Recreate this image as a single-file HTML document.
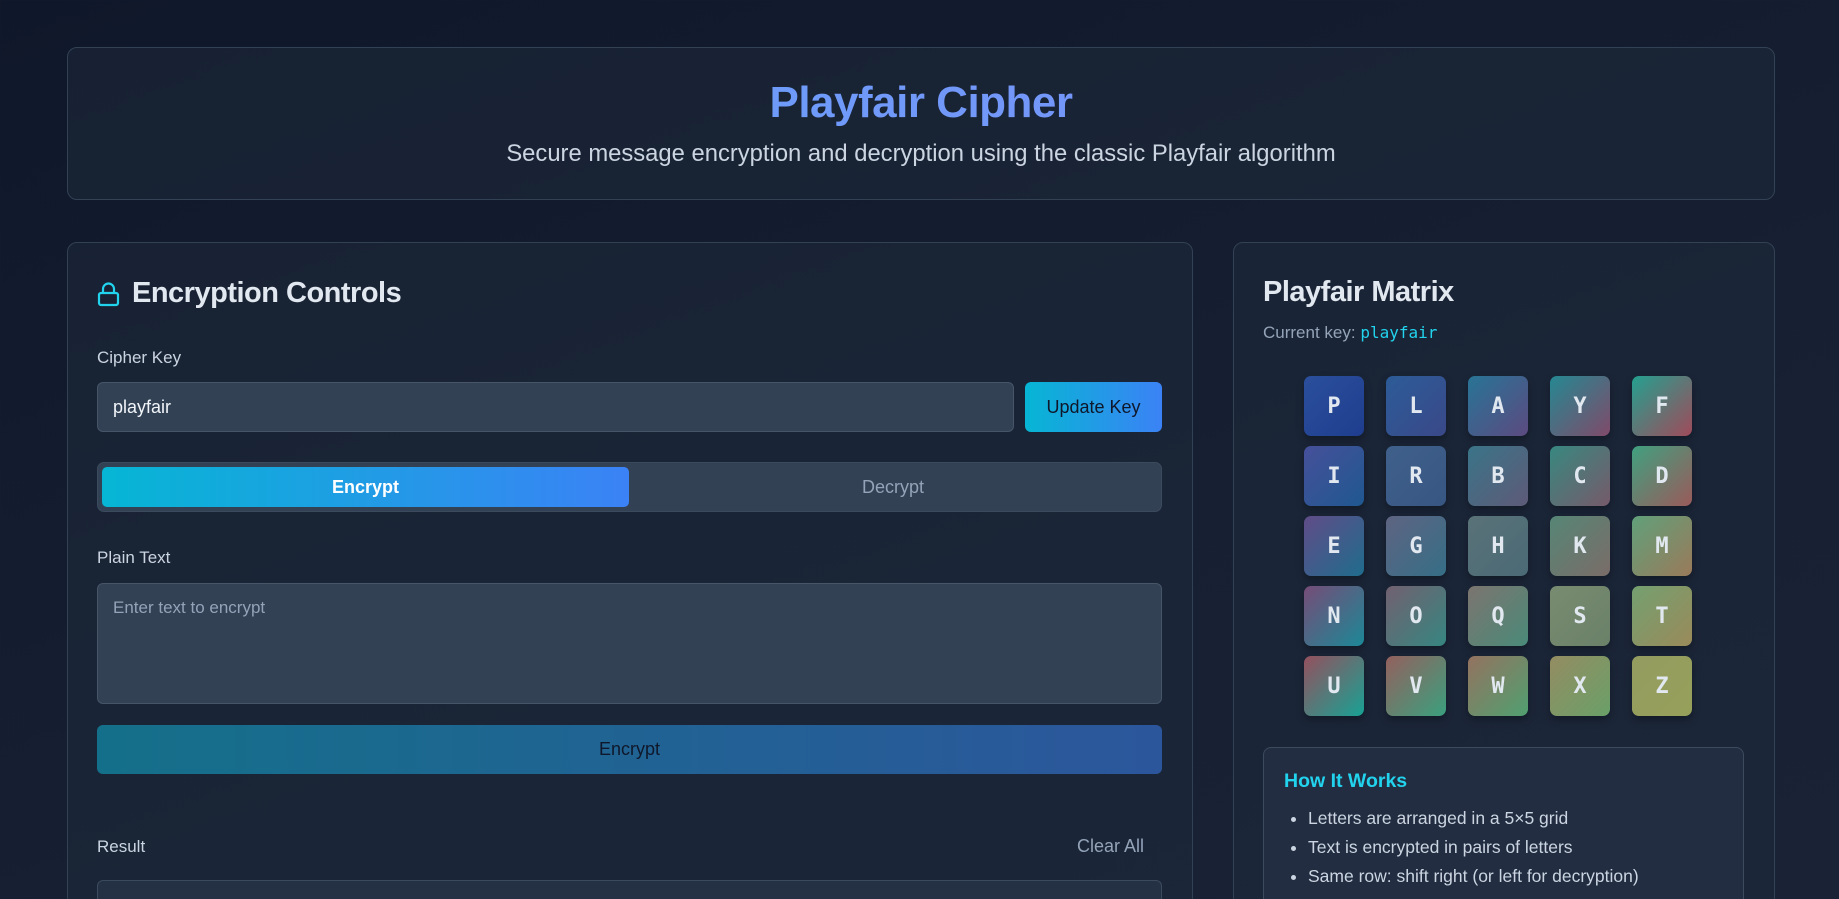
<!DOCTYPE html>
<html><head><meta charset="utf-8"><style>
*{box-sizing:border-box;margin:0;padding:0}
html,body{width:1839px;height:899px;overflow:hidden}
body{background:linear-gradient(160deg,#0f172a 0%,#172033 60%,#1a2336 100%);font-family:"Liberation Sans",sans-serif;color:#e2e8f0;position:relative}
.card{position:absolute;background:rgba(30,41,59,0.55);border:1px solid #334155;border-radius:10px}
.abs{position:absolute}
h1{position:absolute;left:0;right:0;text-align:center;font-size:44px;font-weight:700;background:linear-gradient(90deg,#60a5fa,#818cf8);-webkit-background-clip:text;background-clip:text;color:transparent;letter-spacing:-0.5px}
.sub{position:absolute;left:0;right:0;text-align:center;font-size:23.8px;color:#cbd5e1}
.lbl{font-size:17px;color:#cbd5e1}
.cell{position:absolute;width:60px;height:60px;border-radius:7px;font-family:"DejaVu Sans Mono","Liberation Mono",monospace;font-weight:700;font-size:22px;color:#e2e8f0;display:flex;align-items:center;justify-content:center;box-shadow:0 4px 8px rgba(0,0,0,0.3)}
li{margin-bottom:10px}
</style></head><body>
<div class="card" style="left:67px;top:47px;width:1708px;height:153px">
<h1 style="top:30px">Playfair Cipher</h1>
<div class="sub" style="top:92px">Secure message encryption and decryption using the classic Playfair algorithm</div>
</div>

<div class="card" style="left:67px;top:242px;width:1126px;height:665px"></div>
<svg class="abs" style="left:97px;top:281px" width="24" height="26" viewBox="0 0 24 26" fill="none" stroke="#22d3ee" stroke-width="2.2"><rect x="2" y="12" width="19" height="12" rx="2"/><path d="M6 12V8a5.5 5.5 0 0 1 11 0v4"/></svg>
<div class="abs" style="left:132px;top:277px;font-size:29px;font-weight:700;color:#e2e8f0;letter-spacing:-0.5px">Encryption Controls</div>
<div class="abs lbl" style="left:97px;top:348px">Cipher Key</div>
<div class="abs" style="left:97px;top:382px;width:917px;height:50px;background:#334155;border:1px solid #475569;border-radius:6px;padding:14px 15px;font-size:18px;color:#f1f5f9">playfair</div>
<div class="abs" style="left:1025px;top:382px;width:137px;height:50px;border-radius:6px;background:linear-gradient(90deg,#06b6d4,#3b82f6);color:#0f172a;font-size:18px;display:flex;align-items:center;justify-content:center">Update Key</div>
<div class="abs" style="left:97px;top:462px;width:1065px;height:50px;background:#334155;border-radius:7px;border:1px solid #3c4a5e"></div>
<div class="abs" style="left:102px;top:467px;width:527px;height:40px;border-radius:5px;background:linear-gradient(90deg,#06b6d4,#3b82f6);color:#fff;font-weight:700;font-size:18px;display:flex;align-items:center;justify-content:center">Encrypt</div>
<div class="abs" style="left:629px;top:467px;width:528px;height:40px;color:#94a3b8;font-size:18px;display:flex;align-items:center;justify-content:center">Decrypt</div>
<div class="abs lbl" style="left:97px;top:548px">Plain Text</div>
<div class="abs" style="left:97px;top:583px;width:1065px;height:121px;background:#334155;border:1px solid #475569;border-radius:6px;padding:14px 15px;font-size:17px;color:#94a3b8">Enter text to encrypt</div>
<div class="abs" style="left:97px;top:725px;width:1065px;height:49px;border-radius:6px;background:linear-gradient(90deg,#14708a,#2c569c);color:#0f172a;font-size:18px;display:flex;align-items:center;justify-content:center">Encrypt</div>
<div class="abs lbl" style="left:97px;top:837px">Result</div>
<div class="abs" style="left:1077px;top:836px;font-size:18px;color:#94a3b8">Clear All</div>
<div class="abs" style="left:97px;top:880px;width:1065px;height:19px;background:#243044;border:1px solid #3c4a5e;border-bottom:none;border-radius:6px 6px 0 0"></div>

<div class="card" style="left:1233px;top:242px;width:542px;height:665px"></div>
<div class="abs" style="left:1263px;top:276px;font-size:29px;font-weight:700;color:#e2e8f0;letter-spacing:-0.5px">Playfair Matrix</div>
<div class="abs" style="left:1263px;top:323px;font-size:17px;color:#94a3b8">Current key: <span style="font-family:'DejaVu Sans Mono',monospace;color:#22d3ee;font-size:16px">playfair</span></div>

<div class="cell" style="left:1304px;top:376px;background:linear-gradient(135deg,#2b4f9c,#1e3d8e)">P</div>
<div class="cell" style="left:1386px;top:376px;background:linear-gradient(135deg,#2c5c98,#3a4888)">L</div>
<div class="cell" style="left:1468px;top:376px;background:linear-gradient(135deg,#287496,#5c4a80)">A</div>
<div class="cell" style="left:1550px;top:376px;background:linear-gradient(135deg,#258892,#804a6a)">Y</div>
<div class="cell" style="left:1632px;top:376px;background:linear-gradient(135deg,#24a090,#a04a5a)">F</div>
<div class="cell" style="left:1304px;top:446px;background:linear-gradient(135deg,#46509a,#1f5890)">I</div>
<div class="cell" style="left:1386px;top:446px;background:linear-gradient(135deg,#40608c,#385682)">R</div>
<div class="cell" style="left:1468px;top:446px;background:linear-gradient(135deg,#3a7488,#5e5a78)">B</div>
<div class="cell" style="left:1550px;top:446px;background:linear-gradient(135deg,#388880,#765a6a)">C</div>
<div class="cell" style="left:1632px;top:446px;background:linear-gradient(135deg,#40a080,#9a5a5a)">D</div>
<div class="cell" style="left:1304px;top:516px;background:linear-gradient(135deg,#604c88,#1f6c8c)">E</div>
<div class="cell" style="left:1386px;top:516px;background:linear-gradient(135deg,#5e6482,#366e86)">G</div>
<div class="cell" style="left:1468px;top:516px;background:linear-gradient(135deg,#5a7278,#4a6a76)">H</div>
<div class="cell" style="left:1550px;top:516px;background:linear-gradient(135deg,#568676,#7a6c68)">K</div>
<div class="cell" style="left:1632px;top:516px;background:linear-gradient(135deg,#60a07a,#9a7a5a)">M</div>
<div class="cell" style="left:1304px;top:586px;background:linear-gradient(135deg,#764c78,#1c8896)">N</div>
<div class="cell" style="left:1386px;top:586px;background:linear-gradient(135deg,#726070,#368680)">O</div>
<div class="cell" style="left:1468px;top:586px;background:linear-gradient(135deg,#7c7470,#4a8a78)">Q</div>
<div class="cell" style="left:1550px;top:586px;background:linear-gradient(135deg,#788c70,#6a8068)">S</div>
<div class="cell" style="left:1632px;top:586px;background:linear-gradient(135deg,#74a070,#9a8a5a)">T</div>
<div class="cell" style="left:1304px;top:656px;background:linear-gradient(135deg,#94505e,#18a294)">U</div>
<div class="cell" style="left:1386px;top:656px;background:linear-gradient(135deg,#94605e,#3aa07e)">V</div>
<div class="cell" style="left:1468px;top:656px;background:linear-gradient(135deg,#947260,#50a070)">W</div>
<div class="cell" style="left:1550px;top:656px;background:linear-gradient(135deg,#948c62,#6aa068)">X</div>
<div class="cell" style="left:1632px;top:656px;background:linear-gradient(135deg,#949c60,#96a05a)">Z</div>

<div class="abs" style="left:1263px;top:747px;width:481px;height:160px;background:#222d41;border:1px solid #3c4a5e;border-radius:8px"></div>
<div class="abs" style="left:1284px;top:770px;font-size:19.5px;font-weight:700;color:#22d3ee">How It Works</div>
<ul class="abs" style="left:1308px;top:809px;font-size:17.5px;color:#cbd5e1;line-height:19px">
<li>Letters are arranged in a 5×5 grid</li>
<li>Text is encrypted in pairs of letters</li>
<li>Same row: shift right (or left for decryption)</li>
</ul>
</body></html>
